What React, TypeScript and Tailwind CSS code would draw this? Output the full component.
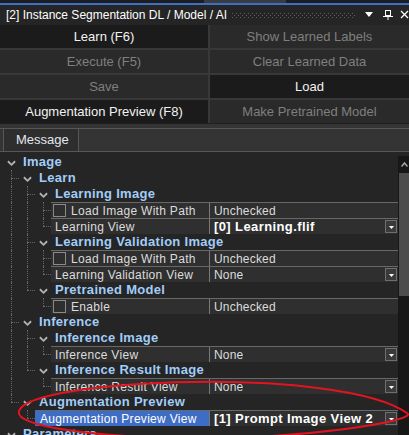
import React from "react";

type Row =
  | { kind: "cat"; label: string; guides: string }
  | {
      kind: "prop";
      label: string;
      guides: string;
      value: string;
      check?: boolean;
      bold?: boolean;
      drop?: boolean;
      selected?: boolean;
    };

const rows: Row[] = [
  { kind: "cat", label: "Image", guides: "" },
  { kind: "cat", label: "Learn", guides: "T" },
  { kind: "cat", label: "Learning Image", guides: "|T" },
  { kind: "prop", label: "Load Image With Path", guides: "||T", value: "Unchecked", check: true },
  { kind: "prop", label: "Learning View", guides: "||L", value: "[0] Learning.flif", bold: true, drop: true },
  { kind: "cat", label: "Learning Validation Image", guides: "|T" },
  { kind: "prop", label: "Load Image With Path", guides: "||T", value: "Unchecked", check: true },
  { kind: "prop", label: "Learning Validation View", guides: "||L", value: "None", drop: true },
  { kind: "cat", label: "Pretrained Model", guides: "|L" },
  { kind: "prop", label: "Enable", guides: "| L", value: "Unchecked", check: true },
  { kind: "cat", label: "Inference", guides: "T" },
  { kind: "cat", label: "Inference Image", guides: "|T" },
  { kind: "prop", label: "Inference View", guides: "||L", value: "None", drop: true },
  { kind: "cat", label: "Inference Result Image", guides: "|L" },
  { kind: "prop", label: "Inference Result View", guides: "| L", value: "None", drop: true },
  { kind: "cat", label: "Augmentation Preview", guides: "L" },
  {
    kind: "prop",
    label: "Augmentation Preview View",
    guides: " L",
    value: "[1] Prompt Image View 2",
    bold: true,
    drop: true,
    selected: true
  },
  { kind: "cat", label: "Parameters", guides: "" }
];

const buttons: [string, boolean][] = [
  ["Learn (F6)", true],
  ["Show Learned Labels", false],
  ["Execute (F5)", false],
  ["Clear Learned Data", false],
  ["Save", false],
  ["Load", true],
  ["Augmentation Preview (F8)", true],
  ["Make Pretrained Model", false]
];

function Guide({ g }: { g: string }) {
  return (
    <div className="relative w-[16px] shrink-0 self-stretch">
      {(g === "|" || g === "T") && (
        <div className="absolute left-[11px] top-0 bottom-0 border-l border-dotted border-[#646464]" />
      )}
      {g === "L" && (
        <div className="absolute left-[11px] top-0 h-[8px] border-l border-dotted border-[#646464]" />
      )}
      {(g === "T" || g === "L") && (
        <div className="absolute left-[11px] top-[8px] w-[8px] border-t border-dotted border-[#646464]" />
      )}
    </div>
  );
}

function Chevron() {
  return (
    <div className="flex w-[16px] shrink-0 items-center">
      <svg width="10" height="7" viewBox="0 0 10 7" className="ml-[7px] mt-[2px]">
        <polyline points="1,1 5,5 9,1" fill="none" stroke="#b4b4b4" strokeWidth="2" />
      </svg>
    </div>
  );
}

function DropButton() {
  return (
    <div className="mr-[1px] flex h-[13px] w-[12px] shrink-0 items-center justify-center border border-[#6e6e6e] bg-[#3a3a3a]">
      <svg width="5" height="3" viewBox="0 0 5 3" className="mt-[1px]">
        <polygon points="0,0 5,0 2.5,3" fill="#ffffff" />
      </svg>
    </div>
  );
}

function TreeRow({ row }: { row: Row }) {
  const guides = row.guides.split("");
  if (row.kind === "cat") {
    return (
      <div className="flex h-[16px] items-center">
        {guides.map((g, i) => (
          <Guide key={i} g={g} />
        ))}
        <Chevron />
        <span className="ml-[7px] whitespace-nowrap text-[13px] font-bold tracking-[0.3px] text-[#a1cdf8]">
          {row.label}
        </span>
      </div>
    );
  }
  return (
    <div className="flex h-[16px]">
      {guides.map((g, i) => (
        <Guide key={i} g={g} />
      ))}
      <div className="ml-[3px] flex flex-1 border-t border-[#686868] bg-[#2f2f2f]">
        <div
          className={`flex min-w-0 flex-1 items-center whitespace-nowrap text-[12px] tracking-[0.3px] ${
            row.selected ? "bg-[#3e6dc5] pl-[5px] text-white" : "pl-[2px] text-[#dcdcdc]"
          }`}
        >
          {row.check ? (
            <>
              <div className="h-[13px] w-[13px] shrink-0 border border-[#8a8a8a] bg-[#2e2e2e]" />
              <span className="ml-[5px]">{row.label}</span>
            </>
          ) : (
            <span className={row.selected ? "" : "ml-[2px]"}>{row.label}</span>
          )}
        </div>
        <div className="flex w-[189px] shrink-0 items-center border-l border-[#787878]">
          <span
            className={`flex-1 truncate pl-[4px] ${
              row.bold
                ? "text-[13px] font-bold tracking-[0.4px] text-white"
                : "text-[12px] tracking-[0.2px] text-[#dcdcdc]"
            }`}
          >
            {row.value}
          </span>
          {row.drop && <DropButton />}
        </div>
      </div>
    </div>
  );
}

export default function App() {
  return (
    <div className="relative h-[435px] w-[409px] overflow-hidden bg-[#252526] font-['Liberation_Sans',Arial,sans-serif]">
      {/* top strip */}
      <div className="flex h-[3px] bg-[#1e1e1e]">
        <div className="ml-[204px] w-[82px] bg-[#3c3c3c]" />
      </div>
      <div className="h-[2px] bg-[#3b6fcb]" />

      {/* title bar */}
      <div className="flex h-[20px] items-center bg-[#252526] pl-[6px]">
        <span className="whitespace-nowrap text-[12px] text-white">
          [2] Instance Segmentation DL / Model / AI
        </span>
        <svg className="ml-[5px] h-[5px] flex-1" preserveAspectRatio="none">
          <defs>
            <pattern id="grip" width="4" height="4" patternUnits="userSpaceOnUse">
              <rect x="0" y="0" width="1" height="1" fill="#5e5e5e" />
              <rect x="2" y="2" width="1" height="1" fill="#5e5e5e" />
            </pattern>
          </defs>
          <rect width="100%" height="5" fill="url(#grip)" />
        </svg>
        <svg width="44" height="12" viewBox="0 0 44 12" className="ml-[10px] shrink-0">
          <polygon points="0,3 8,3 4,8" fill="#ffffff" />
          <rect x="20.5" y="1.5" width="5" height="5" fill="none" stroke="#ffffff" />
          <line x1="18" y1="7.5" x2="28" y2="7.5" stroke="#ffffff" />
          <line x1="23" y1="7.5" x2="23" y2="11" stroke="#ffffff" />
          <line x1="36" y1="2" x2="43" y2="9" stroke="#ffffff" strokeWidth="1.3" />
          <line x1="43" y1="2" x2="36" y2="9" stroke="#ffffff" strokeWidth="1.3" />
        </svg>
      </div>

      {/* command buttons */}
      <div className="grid grid-cols-[208px_1fr] gap-[2px] bg-[#383838]">
        {buttons.map(([label, enabled]) => (
          <div
            key={label}
            className={`flex h-[23px] items-center justify-center text-[13px] ${
              enabled ? "bg-[#1b1b1b] text-[#f2f2f2]" : "bg-[#2a2a2a] text-[#7f7f7f]"
            }`}
          >
            {label}
          </div>
        ))}
      </div>
      <div className="h-[1px] bg-[#1e1e1e]" />

      {/* tab strip */}
      <div className="bg-[#343434] pt-[4px]">
        <div className="flex h-[24px] border-y border-[#575757]">
          <div className="ml-[3px] flex w-[76px] items-center border-x border-[#575757] bg-[#2e2e2e] pl-[12px] text-[13px] text-[#e2e6ec]">
            Message
          </div>
        </div>
      </div>

      {/* property tree */}
      <div className="flex">
        <div className="w-[398px] shrink-0 pt-[2px]">
          {rows.map((row, i) => (
            <TreeRow key={i} row={row} />
          ))}
        </div>
        <div className="mt-[4px] flex h-[300px] w-[11px] flex-col bg-[#171717]">
          <div className="flex h-[17px] items-center justify-center">
            <svg width="7" height="5" viewBox="0 0 7 5" className="ml-[1px]">
              <polyline points="0.5,4.5 3.5,1 6.5,4.5" fill="none" stroke="#a8a8a8" strokeWidth="1.5" />
            </svg>
          </div>
          <div className="ml-[1px] h-[123px] bg-[#4d4d4d]" />
        </div>
      </div>

      {/* red annotation */}
      <svg className="pointer-events-none absolute inset-0" width="409" height="435" viewBox="0 0 409 435">
        <path
          d="M 19 411 C 30 378, 340 366, 407 413 C 420 421, 300 440, 180 438 C 90 436.5, 14 426, 19 411 Z"
          fill="none"
          stroke="#e3141f"
          strokeWidth="2"
        />
      </svg>
    </div>
  );
}
